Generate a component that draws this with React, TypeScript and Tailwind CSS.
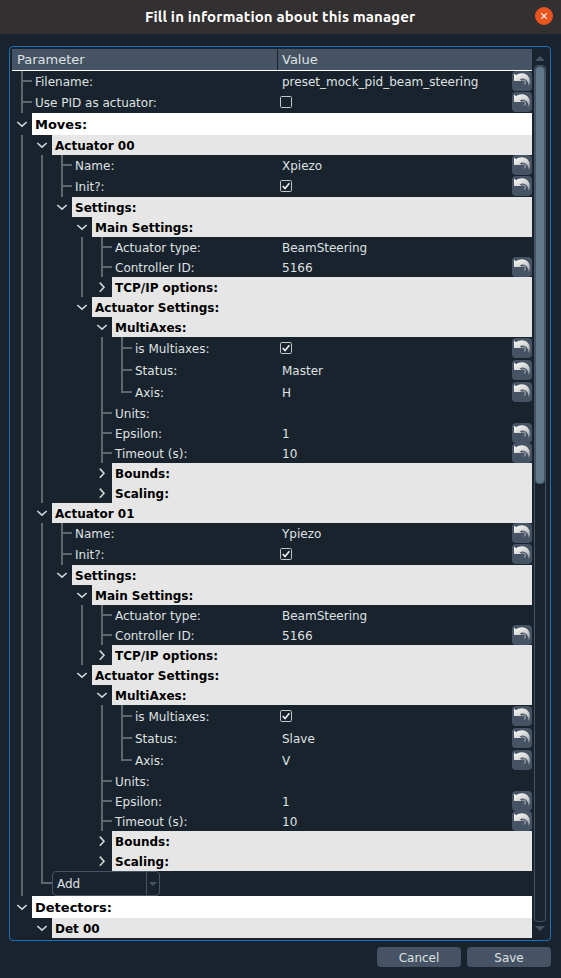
import React from "react";

type Kind = "item" | "group" | "top" | "add";

interface Row {
  label: string;
  level: number;
  height: string;
  kind?: Kind;
  // Columns whose vertical guide passes through the row
  guides?: number[];
  value?: string;
  checked?: boolean;
  closed?: boolean;
  last?: boolean;
  undo?: boolean;
}

const H20 = "h-5";
const H21 = "h-[21px]";
const H22 = "h-[22px]";

function actuator(title: string, name: string, status: string, axis: string): Row[] {
  return [
    { label: title, level: 1, height: H20, kind: "group", guides: [0] },
    { label: "Name:", level: 2, height: H21, guides: [0, 1], value: name, undo: true },
    { label: "Init?:", level: 2, height: H21, guides: [0, 1], checked: true, undo: true },
    { label: "Settings:", level: 2, height: H20, kind: "group", guides: [0, 1] },
    { label: "Main Settings:", level: 3, height: H20, kind: "group", guides: [0, 1] },
    { label: "Actuator type:", level: 4, height: H20, guides: [0, 1, 3], value: "BeamSteering" },
    { label: "Controller ID:", level: 4, height: H20, guides: [0, 1, 3], value: "5166", undo: true },
    { label: "TCP/IP options:", level: 4, height: H20, kind: "group", guides: [0, 1, 3], closed: true },
    { label: "Actuator Settings:", level: 3, height: H20, kind: "group", guides: [0, 1] },
    { label: "MultiAxes:", level: 4, height: H20, kind: "group", guides: [0, 1] },
    { label: "is Multiaxes:", level: 5, height: H22, guides: [0, 1, 4], checked: true, undo: true },
    { label: "Status:", level: 5, height: H22, guides: [0, 1, 4], value: status, undo: true },
    { label: "Axis:", level: 5, height: H22, guides: [0, 1, 4], value: axis, undo: true, last: true },
    { label: "Units:", level: 4, height: H20, guides: [0, 1] },
    { label: "Epsilon:", level: 4, height: H20, guides: [0, 1], value: "1", undo: true },
    { label: "Timeout (s):", level: 4, height: H20, guides: [0, 1], value: "10", undo: true },
    { label: "Bounds:", level: 4, height: H20, kind: "group", guides: [0, 1], closed: true },
    { label: "Scaling:", level: 4, height: H20, kind: "group", guides: [0, 1], closed: true },
  ];
}

const rows: Row[] = [
  { label: "Filename:", level: 0, height: H21, value: "preset_mock_pid_beam_steering", undo: true },
  { label: "Use PID as actuator:", level: 0, height: H21, checked: false, undo: true },
  { label: "Moves:", level: 0, height: H22, kind: "top" },
  ...actuator("Actuator 00", "Xpiezo", "Master", "H"),
  ...actuator("Actuator 01", "Ypiezo", "Slave", "V"),
  { label: "Add", level: 1, height: "h-[25px]", kind: "add", guides: [0], last: true },
  { label: "Detectors:", level: 0, height: H22, kind: "top" },
  { label: "Det 00", level: 1, height: H20, kind: "group" },
];

function Chevron({ closed }: { closed?: boolean }) {
  return (
    <svg className="h-3 w-3" viewBox="0 0 12 12" fill="none" stroke="#d3d6d9" strokeWidth="1.6">
      <path d={closed ? "M3.8 1.6 L8 6.2 L3.8 10.8" : "M1.3 4 L6 8.2 L10.7 4"} />
    </svg>
  );
}

function UndoButton() {
  return (
    <span className="block h-5 w-5 shrink-0 rounded bg-[#455364]">
      <svg className="block h-5 w-5" viewBox="0 0 20 20">
        <defs>
          <linearGradient id="arrow" x1="0.3" y1="0" x2="0.9" y2="1">
            <stop offset="0" stopColor="#f2f2f0" />
            <stop offset="0.5" stopColor="#d2d3d2" />
            <stop offset="1" stopColor="#8f949a" />
          </linearGradient>
        </defs>
        <path
          d="M2 2.5 L4.2 4.2 C8 1.2 14.500 1.5 17 6.500 C18.2 9 18.2 12.5 16.7 15 C16.5 11.500 15 8.300 11.8 7.700 C10 7.400 8.7 7.9 8 8.3 L9.500 9.900 L2 9.900 Z"
          fill="url(#arrow)"
        />
        <path
          d="M9.6 9.6 C11.2 8.700 13 9.300 13.300 10.800 C13.500 12 12.900 12.900 12 13.400"
          fill="none"
          stroke="#8b9198"
          strokeWidth="1.5"
        />
      </svg>
    </span>
  );
}

function Checkbox({ checked }: { checked: boolean }) {
  return (
    <svg className="-ml-0.5 h-3 w-3" viewBox="0 0 12 12" fill="none">
      <rect x="0.5" y="0.5" width="11" height="11" rx="1.2" stroke="#c3c6c8" />
      {checked && <path d="M2.7 6 L5 8.5 L9.4 3.2" stroke="#f0f1f2" strokeWidth="1.6" />}
    </svg>
  );
}

function GuideCell({ on }: { on: boolean }) {
  return (
    <span className="flex w-5 shrink-0 pl-[9px]">
      {on && <span className="w-0.5 bg-[#60676c]" />}
    </span>
  );
}

function Branch({ last, odd }: { last?: boolean; odd?: boolean }) {
  return (
    <span className="flex w-5 shrink-0 pl-[9px]">
      <span
        className={`w-0.5 bg-[#60676c] ${last ? (odd ? "h-[13px]" : "h-3") : ""}`}
      />
      <span className={`flex flex-1 flex-col justify-center ${odd ? "pb-px" : ""}`}>
        <span className="h-0.5 bg-[#60676c]" />
      </span>
    </span>
  );
}

function TreeRow({ row }: { row: Row }) {
  const { kind = "item", guides = [] } = row;
  const odd = row.height === H21;
  const nudge = odd ? "" : "pt-0.5";
  const cells = Array.from({ length: row.level }, (_, i) => (
    <GuideCell key={i} on={guides.includes(i)} />
  ));

  if (kind === "group" || kind === "top") {
    return (
      <div className={`flex shrink-0 ${row.height}`}>
        {cells}
        <span className="flex w-5 shrink-0 items-center justify-center">
          <Chevron closed={row.closed} />
        </span>
        <span
          className={`flex flex-1 items-center whitespace-pre pl-[3px] font-bold text-black ${
            kind === "top" ? "bg-white pt-px text-[13px]" : "bg-[#e6e6e6] pt-0.5 text-[12px]"
          }`}
        >
          {row.label}
        </span>
      </div>
    );
  }

  if (kind === "add") {
    return (
      <div className={`flex shrink-0 ${row.height}`}>
        {cells}
        <Branch last odd />
        <span className="flex w-[108px] rounded border border-[#455364]">
          <span className="flex flex-1 items-center pl-1">{row.label}</span>
          <span className="flex w-[13px] items-center justify-center border-l border-[#455364]">
            <svg className="h-1 w-2" viewBox="0 0 8 4">
              <path d="M0 0H8L4 4Z" fill="#455364" />
            </svg>
          </span>
        </span>
      </div>
    );
  }

  return (
    <div className={`flex shrink-0 ${row.height}`}>
      <div className="flex w-[266px] shrink-0">
        {cells}
        <Branch last={row.last} odd={odd} />
        <span className={`flex items-center whitespace-pre pl-[3px] ${nudge}`}>{row.label}</span>
      </div>
      {row.checked !== undefined ? (
        <div className={`flex flex-1 items-center pl-1 ${odd ? "pb-px" : ""}`}>
          <Checkbox checked={row.checked} />
        </div>
      ) : (
        <div className={`flex flex-1 items-center pl-1 ${nudge}`}>{row.value}</div>
      )}
      {row.undo && (
        <span className={row.height === H22 ? "block pt-px" : "block"}>
          <UndoButton />
        </span>
      )}
    </div>
  );
}

function ScrollBar() {
  return (
    <div className="ml-0.5 flex w-3 flex-col items-center">
      <svg className="mt-[7px] h-[5px] w-[10px] shrink-0" viewBox="0 0 10 5">
        <path d="M0 5H10L5 0Z" fill="#455364" />
      </svg>
      <div className="mt-1 h-[857px] w-3 shrink-0 rounded border border-[#455364]">
        <div className="h-[418px] rounded border border-[#455364] bg-[#60798b]" />
      </div>
      <svg className="mt-1 h-[5px] w-[10px] shrink-0" viewBox="0 0 10 5">
        <path d="M0 0H10L5 5Z" fill="#455364" />
      </svg>
    </div>
  );
}

export default function App() {
  return (
    <div className="flex h-[978px] w-[561px] flex-col overflow-hidden bg-[#19232d] font-['DejaVu_Sans',sans-serif] text-[12px] leading-none text-[#dfe1e2]">
      <header className="flex h-[34px] shrink-0 items-center justify-end bg-[#333031] pr-2">
        <h1 className="w-[390px] whitespace-nowrap pb-px text-[15px] font-bold tracking-[0.12px] text-white font-['Ubuntu','Noto_Sans',sans-serif]">
          Fill in information about this manager
        </h1>
        <button className="mb-0.5 flex h-[18px] w-[18px] items-center justify-center rounded-full bg-[#e95420]">
          <svg className="h-[6px] w-[6px]" viewBox="0 0 6 6" stroke="#fff" strokeWidth="1.1">
            <path d="M0.3 0.3L5.7 5.7M5.7 0.3L0.3 5.7" />
          </svg>
        </button>
      </header>

      <main className="mt-3 ml-[9px] flex h-[895px] w-[542px] shrink-0 rounded border border-[#1a72bb] py-0.5 pl-0.5">
        <div className="flex w-[520px] flex-col">
          <div className="flex h-[22px] shrink-0 border-b border-white bg-[#455364] text-[13px]">
            <div className="flex w-[266px] items-center border-r border-[#19232d] pl-[5px]">Parameter</div>
            <div className="flex items-center pl-1">Value</div>
          </div>
          {rows.map((row, i) => (
            <TreeRow key={i} row={row} />
          ))}
        </div>
        <ScrollBar />
      </main>

      <footer className="mt-1.5 flex justify-end gap-1.5 pr-2.5">
        <button className="h-5 w-[84px] rounded bg-[#455364] pt-0.5">Cancel</button>
        <button className="h-5 w-[84px] rounded bg-[#455364] pt-0.5">Save</button>
      </footer>
    </div>
  );
}
